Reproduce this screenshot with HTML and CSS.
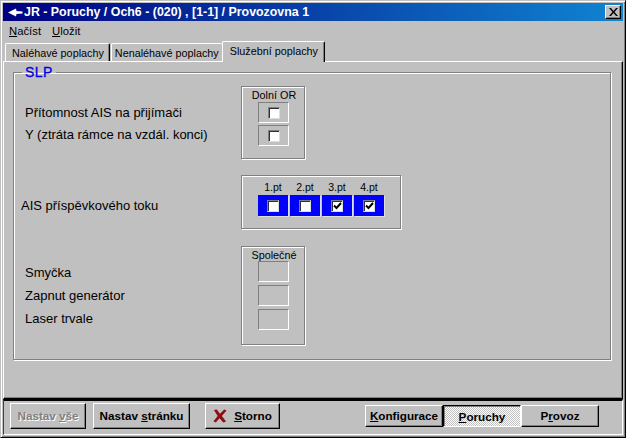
FILE: index.html
```html
<!DOCTYPE html>
<html lang="cs">
<head>
<meta charset="utf-8">
<title>JR - Poruchy</title>
<link rel="stylesheet" href="styles.css">
</head>
<body>
<div class="window">
  <div class="titlebar">
    <svg class="appicon" width="15" height="9" viewBox="0 0 15 9"><path d="M0 4.500 L8 0.500 L8.500 3 L14.500 3.500 L14.500 5.500 L8.500 6 L8 8.500 Z" fill="#fff"/></svg>
    <span class="title">JR - Poruchy / Och6 - (020) , [1-1] / Provozovna 1</span>
    <span class="close"><svg width="9" height="8" viewBox="0 0 9 8"><path d="M0 0h2l2.500 3 2.500-3h2L5.500 4 9 8H7L4.500 5 2 8H0l3.500-4z" fill="#000"/></svg></span>
  </div>
  <div class="menu"><span><u>N</u>ačíst</span><span><u>U</u>ložit</span></div>
  <div class="tabs">
    <span class="tab tab-first">Naléhavé poplachy</span>
    <span class="tab tab-second">Nenaléhavé poplachy</span>
    <span class="tab active">Služební poplachy</span>
  </div>
  <div class="panel">
    <fieldset class="group">
      <legend>SLP</legend>
      <div class="row row-or">
        <div class="labels labels-or"><p>Přítomnost AIS na přijímači</p><p>Y (ztráta rámce na vzdál. konci)</p></div>
        <div class="box box-narrow">
          <div class="boxhead">Dolní OR</div>
          <div class="cell"><span class="check"></span></div>
          <div class="cell"><span class="check"></span></div>
        </div>
      </div>
      <div class="row row-pt">
        <div class="labels labels-pt"><p>AIS příspěvkového toku</p></div>
        <div class="box box-wide">
          <div class="pts">
            <div class="pt"><span class="ptname">1.pt</span><div class="bluecell"><span class="check"></span></div></div>
            <div class="pt"><span class="ptname">2.pt</span><div class="bluecell"><span class="check"></span></div></div>
            <div class="pt"><span class="ptname">3.pt</span><div class="bluecell"><span class="check"><svg width="9" height="8" viewBox="0 0 9 8"><path d="M1 3.500 L3.500 6 L8 1" fill="none" stroke="#000" stroke-width="2"/></svg></span></div></div>
            <div class="pt"><span class="ptname">4.pt</span><div class="bluecell"><span class="check"><svg width="9" height="8" viewBox="0 0 9 8"><path d="M1 3.500 L3.500 6 L8 1" fill="none" stroke="#000" stroke-width="2"/></svg></span></div></div>
          </div>
        </div>
      </div>
      <div class="row row-sp">
        <div class="labels labels-sp"><p>Smyčka</p><p>Zapnut generátor</p><p>Laser trvale</p></div>
        <div class="box box-narrow box-sp">
          <div class="boxhead">Společné</div>
          <div class="cell"></div>
          <div class="cell"></div>
          <div class="cell"></div>
        </div>
      </div>
    </fieldset>
  </div>
  <div class="footer">
    <button class="btn btn-all" disabled><span>Nastav <u>v</u>še</span></button>
    <button class="btn btn-page"><span>Nastav <u>s</u>tránku</span></button>
    <button class="btn btn-cancel"><svg width="14" height="14" viewBox="0 0 15 15"><path d="M1 1 L4 0.500 L7.500 5 L12 0.500 L14.500 1.500 L9.500 7.500 L14 13.500 L11 14.500 L7 10 L3 14.500 L0.500 13 L5 7.500 Z" fill="#8c0f14"/></svg><span><u>S</u>torno</span></button>
    <div class="modes">
      <button class="btn mode"><span><u>K</u>onfigurace</span></button>
      <button class="btn mode pressed"><span><u>P</u>oruchy</span></button>
      <button class="btn mode"><span>P<u>r</u>ovoz</span></button>
    </div>
  </div>
</div>
</body>
</html>
```
FILE: styles.css
```css
* { box-sizing: border-box; }
html, body { margin: 0; padding: 0; }
body { width: 626px; height: 438px; overflow: hidden; background: #c0c0c0; font-family: "Liberation Sans", Arial, sans-serif; font-size: 13px; color: #000; }
p { margin: 0; }

.window {
  width: 626px; height: 438px; padding: 2px;
  background: #c0c0c0; display: flex; flex-direction: column;
  border: 1px solid #000; border-top-color: #c0c0c0; border-left-color: #c0c0c0;
  box-shadow: inset 1px 1px 0 #fff, inset -1px -1px 0 #808080;
}

.titlebar {
  height: 18px; flex: none; display: flex; align-items: center; padding: 0 2px 0 5px;
  background: linear-gradient(90deg, #000080, #1084d0);
  color: #fff; font-weight: bold; font-size: 12.400px;
}
.appicon { flex: none; margin-right: 1px; }
.title { flex: 1; white-space: nowrap; }
.close {
  width: 16px; height: 14px; display: flex; align-items: center; justify-content: center;
  background: #c0c0c0; border: 1px solid #000; border-top-color: #fff; border-left-color: #fff;
  box-shadow: inset -1px -1px 0 #808080;
}

.menu { height: 20px; flex: none; display: flex; gap: 11px; align-items: center; padding-left: 6px; font-size: 11.300px; }

.tabs { height: 20px; flex: none; display: flex; align-items: flex-end; padding-left: 2px; position: relative; z-index: 1; font-size: 10.800px; }
.tab {
  height: 18px; padding-top: 3px; white-space: nowrap;
  background: #c0c0c0; border-top: 1px solid #fff; border-left: 1px solid #fff;
  border-right: 1px solid #000; border-radius: 2px 2px 0 0;
  box-shadow: inset -1px 0 0 #808080;
}
.tab-first { padding-left: 6px; padding-right: 5px; }
.tab-second { margin-left: 1px; padding-left: 3px; padding-right: 3px; border-right: 0; box-shadow: none; }
.tab.active { height: 21px; margin-bottom: -1px; padding: 3px 6px 0 7px; }

.panel {
  flex: 1; min-height: 0; padding: 4px 11px 0 9px;
  border: 1px solid #000; border-top-color: #fff; border-left-color: #fff;
  box-shadow: inset -1px -1px 0 #808080;
}

.group {
  margin: 0; padding: 0; min-width: 0; height: 294px;
  border: 1px solid #808080; box-shadow: 1px 1px 0 #fff, inset 1px 1px 0 #fff;
  display: block;
}
.group legend { margin-left: 8px; padding: 0 3px; color: #0000e0; font-size: 14px; line-height: 13px; letter-spacing: 0.5px; -webkit-text-stroke: 0.3px #0000e0; }

.row { display: flex; }
.row-or { margin-top: 7px; height: 73px; }
.row-pt { margin-top: 16px; height: 54px; }
.row-sp { margin-top: 17px; height: 99px; }

.labels { width: 227px; flex: none; }
.labels-or { padding: 16px 0 0 11px; }
.labels-or p { height: 22px; line-height: 22px; }
.labels-pt { padding: 23px 0 0 7px; line-height: 16px; }
.labels-sp { padding: 15px 0 0 11px; }
.labels-sp p { height: 23px; line-height: 23px; }

.box { border: 1px solid #808080; box-shadow: 1px 1px 0 #fff, inset 1px 1px 0 #fff; }
.box-narrow { width: 64px; padding: 0 0 0 16px; }
.box-wide { width: 160px; padding: 3px 0 0 16px; }
.boxhead { height: 15px; line-height: 16px; width: 48px; margin-left: -8px; text-align: center; font-size: 10.800px; white-space: nowrap; }
.box-sp .boxhead { height: 14px; }
.box-sp .cell { margin-bottom: 3px; }

.cell {
  width: 31px; height: 21px; margin-bottom: 2px; display: flex; align-items: center; justify-content: center;
  border: 1px solid #fff; border-top-color: #808080; border-left-color: #808080;
}

.check {
  width: 12px; height: 12px; display: flex; align-items: center; justify-content: center; background: #fff;
  border-top: 1px solid #808080; border-left: 1px solid #808080;
  border-right: 1px solid #dcdcdc; border-bottom: 1px solid #dcdcdc;
  box-shadow: inset 1px 1px 0 #303030;
}

.pts { display: flex; gap: 2px; }
.pt { width: 30px; display: flex; flex-direction: column; align-items: center; }
.ptname { height: 16px; line-height: 17px; font-size: 10.500px; }
.bluecell { width: 30px; height: 21px; background: #0000ff; display: flex; align-items: center; justify-content: center; box-shadow: 1px 1px 0 #e0e0e0; }

.footer {
  height: 36px; flex: none; display: flex; align-items: center; padding: 0 0 4px 6px;
  border: 1px solid #fff; border-top: 2px solid #000; border-left-color: #404040;
}

.btn {
  height: 26px; padding: 0; margin: 0; background: #c0c0c0; font: bold 11.700px "Liberation Sans", Arial, sans-serif; color: #000; white-space: nowrap;
  border: 1px solid #000; border-top-color: #fff; border-left-color: #fff;
  box-shadow: inset -1px -1px 0 #808080; display: flex; align-items: center; justify-content: center;
}
.btn-all { width: 76px; color: #808080; text-shadow: 1px 1px 0 #fff; }
.btn-page { width: 97px; margin-left: 7px; }
.btn-cancel { width: 75px; margin-left: 15px; gap: 7px; }
.modes { display: flex; margin-left: 85px; }
.mode { width: 78px; height: 22px; }
.pressed {
  border: 1px solid #fff; border-top-color: #000; border-left-color: #000;
  box-shadow: inset 1px 1px 0 #808080; padding-top: 2px;
  background: repeating-conic-gradient(#fff 0 25%, #c0c0c0 0 50%) 0 0 / 2px 2px;
}
```
